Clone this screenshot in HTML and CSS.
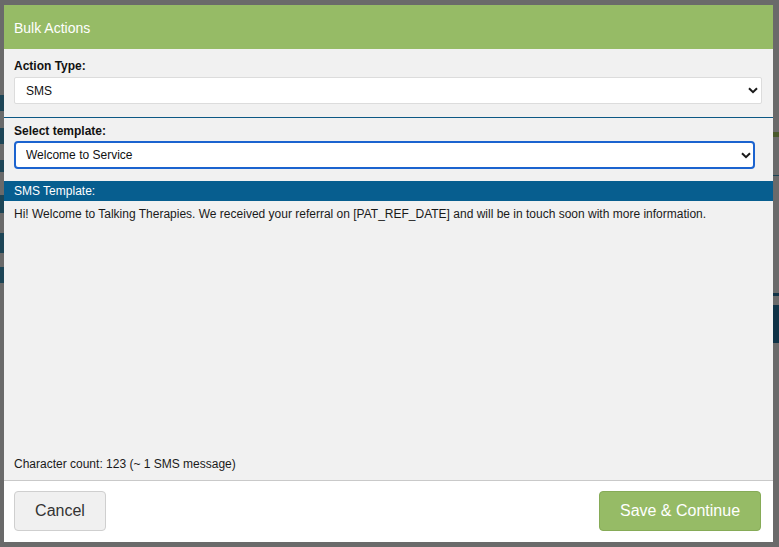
FILE: index.html
```html
<!DOCTYPE html>
<html>
<head>
<meta charset="utf-8">
<link rel="stylesheet" href="styles.css">
</head>
<body>
<div class="backdrop">
  <div class="bg-band left b1"></div>
  <div class="bg-band left b2"></div>
  <div class="bg-band left b3"></div>
  <div class="bg-band left b4"></div>
  <div class="bg-band left b5"></div>
  <div class="bg-band left b6"></div>
  <div class="bg-band right r1"></div>
  <div class="bg-band right r2"></div>
  <div class="bg-band right r3"></div>
  <div class="bg-band right r4"></div>
</div>
<div class="modal">
  <div class="modal-header">Bulk Actions</div>
  <div class="modal-body">
    <div class="section">
      <label class="field-label">Action Type:</label>
      <div class="select-wrap wide">
        <select class="select"><option>SMS</option></select>
        <svg class="chevron" width="10" height="7" viewBox="0 0 10 7"><path d="M1 1.2 L5 5.2 L9 1.2" fill="none" stroke="#1a1a1a" stroke-width="2"/></svg>
      </div>
    </div>
    <div class="divider"></div>
    <div class="section tight">
      <label class="field-label short">Select template:</label>
      <div class="select-wrap narrow">
        <select class="select focused"><option>Welcome to Service</option></select>
        <svg class="chevron" width="10" height="7" viewBox="0 0 10 7"><path d="M1 1.2 L5 5.2 L9 1.2" fill="none" stroke="#1a1a1a" stroke-width="2"/></svg>
      </div>
    </div>
    <div class="template-bar">SMS Template:</div>
    <div class="template-text">Hi! Welcome to Talking Therapies. We received your referral on [PAT_REF_DATE] and will be in touch soon with more information.</div>
    <div class="spacer"></div>
    <div class="char-count">Character count: 123 (~ 1 SMS message)</div>
  </div>
  <div class="modal-footer">
    <button class="btn btn-cancel">Cancel</button>
    <button class="btn btn-save">Save &amp; Continue</button>
  </div>
</div>
</body>
</html>
```
FILE: styles.css
```css
* { box-sizing: border-box; }
html, body {
  margin: 0;
  padding: 0;
}
body {
  width: 779px;
  height: 547px;
  background: #6a6a6a;
  font-family: "Liberation Sans", Arial, sans-serif;
  overflow: hidden;
  position: relative;
}
.backdrop {
  position: absolute;
  inset: 0;
}
.bg-band { position: absolute; }
.bg-band.left { left: 0; width: 4px; background: #1d4556; }
.b1 { top: 95px; height: 16px; }
.b2 { top: 128px; height: 16px; }
.b3 { top: 160px; height: 12px; }
.b4 { top: 195px; height: 18px; }
.b5 { top: 233px; height: 20px; }
.b6 { top: 267px; height: 16px; }
.bg-band.right { left: 773px; width: 6px; }
.r1 { top: 132px; height: 5px; background: #4a5a2c; }
.r2 { top: 175px; height: 1px; background: #1d4556; }
.r3 { top: 293px; height: 3px; background: #123447; }
.r4 { top: 305px; height: 38px; background: #0f3347; }

.modal {
  position: relative;
  margin: 5px 0 0 4px;
  width: 769px;
  height: 537px;
  display: flex;
  flex-direction: column;
  background: #fff;
}
.modal-header {
  height: 44px;
  flex: none;
  background: #96bb66;
  color: #fff;
  font-size: 14px;
  display: flex;
  align-items: center;
  padding: 2px 10px 0;
}
.modal-body {
  flex: 1;
  background: #f1f1f1;
  display: flex;
  flex-direction: column;
  padding-top: 10px;
}
.section {
  padding: 0 10px;
}
.section.tight { padding-top: 6px; }
.field-label {
  display: block;
  font-size: 12px;
  font-weight: bold;
  line-height: 14px;
  color: #111;
  margin-bottom: 4px;
}
.field-label.short { margin-bottom: 3px; }
.select-wrap {
  position: relative;
}
.select-wrap.wide { width: 748px; }
.select-wrap.narrow { width: 741px; }
.select {
  appearance: none;
  -webkit-appearance: none;
  display: block;
  width: 100%;
  height: 27px;
  border: 1px solid #dcdcdc;
  border-radius: 2px;
  background: #fff;
  font-family: "Liberation Sans", Arial, sans-serif;
  font-size: 12px;
  color: #111;
  padding: 0 11px;
  outline: none;
}
.select.focused {
  height: 28px;
  border: 2px solid #1b63cf;
  border-radius: 4px;
  padding: 0 10px;
}
.chevron {
  position: absolute;
  right: 4px;
  top: 10px;
  pointer-events: none;
}
.narrow .chevron { right: 4px; top: 11px; }
.divider {
  height: 1px;
  background: #0d5884;
  margin-top: 13px;
}
.template-bar {
  margin-top: 12px;
  height: 20px;
  background: #075e8f;
  color: #fff;
  font-size: 12px;
  display: flex;
  align-items: center;
  padding: 0 10px;
}
.template-text {
  margin-top: 6px;
  padding: 0 10px;
  font-size: 12px;
  line-height: 14px;
  color: #1a1a1a;
}
.spacer { flex: 1; }
.char-count {
  padding: 0 10px 9px;
  font-size: 12px;
  line-height: 14px;
  color: #1a1a1a;
}
.modal-footer {
  flex: none;
  height: 62px;
  border-top: 1px solid #c9c9c9;
  background: #fff;
  display: flex;
  justify-content: space-between;
  align-items: flex-start;
  padding: 10px 12px 0 10px;
}
.btn {
  height: 40px;
  border-radius: 4px;
  font-family: "Liberation Sans", Arial, sans-serif;
  font-size: 16px;
  cursor: pointer;
}
.btn-cancel {
  width: 92px;
  background: #f0f0f0;
  border: 1px solid #cfcfcf;
  color: #333;
}
.btn-save {
  width: 162px;
  background: #96bb66;
  border: 1px solid #86ab57;
  color: #fff;
}
```
